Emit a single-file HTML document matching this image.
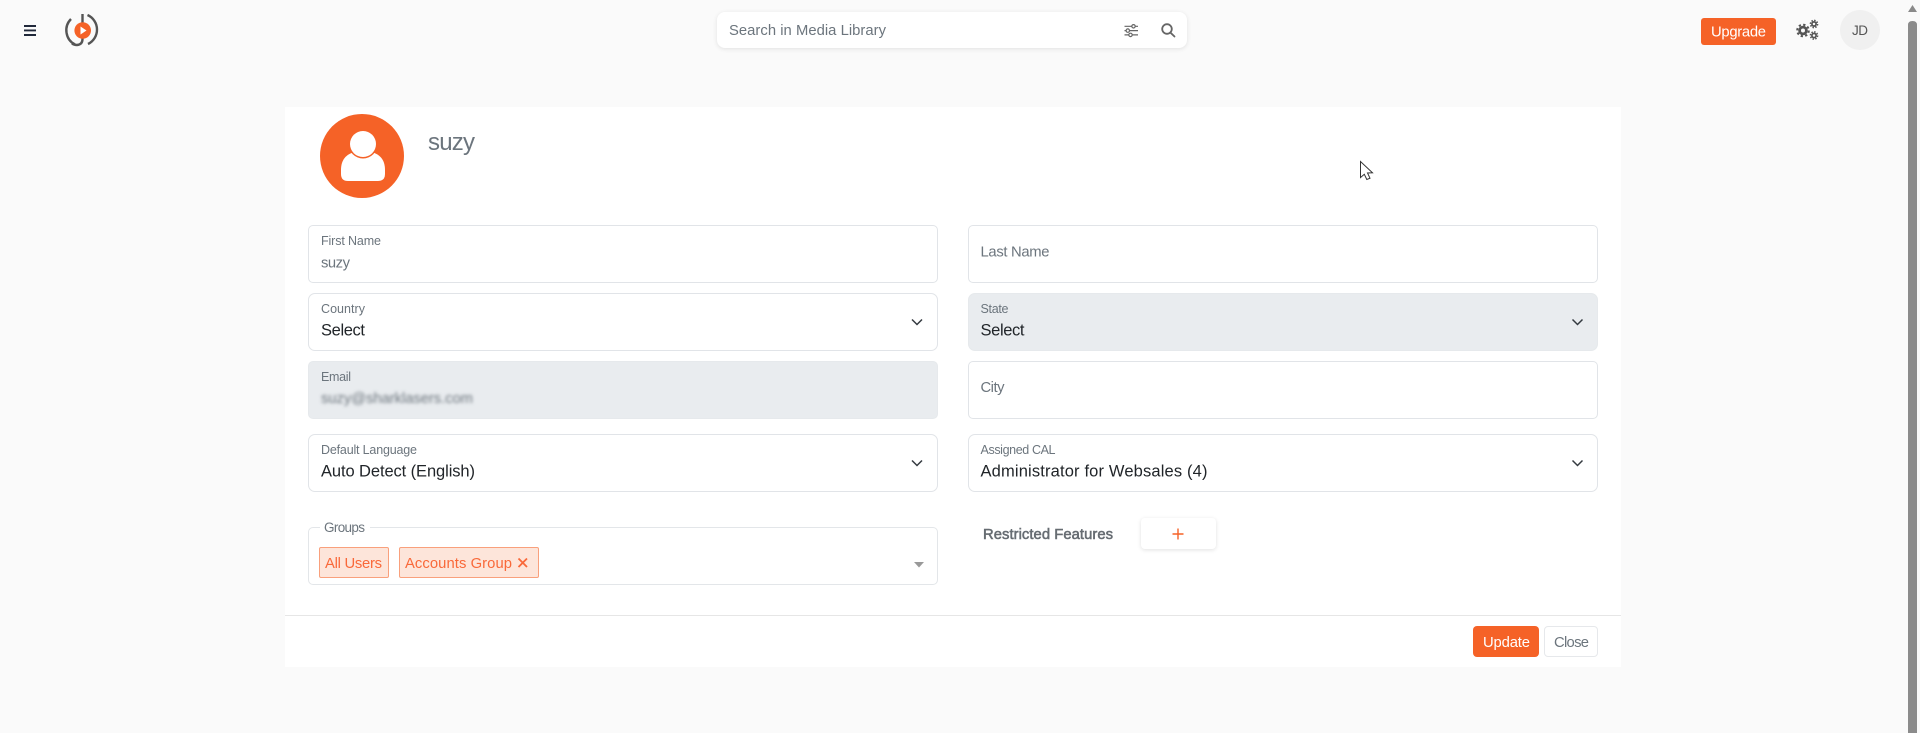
<!DOCTYPE html>
<html lang="en">
<head>
<meta charset="utf-8">
<title>User Profile</title>
<style>
html,body{margin:0;padding:0;width:1920px;height:733px;overflow:hidden;background:#fafafa;font-family:"Liberation Sans",sans-serif}
.b{position:absolute;box-sizing:border-box}
.f{background:#fff;border:1.5px solid #e1e4e8;border-radius:5px}
.d{background:#e9ecef;border-color:#e6e9ec}
#o{position:absolute;left:0;top:0}
text{font-family:"Liberation Sans",sans-serif;white-space:pre}
.l{font-size:12.5px;fill:#6c757d}
.v{font-size:16.5px;fill:#212529}
.p{font-size:14.8px;fill:#6c757d}
</style>
</head>
<body>
<div class="b" style="left:285px;top:107px;width:1336px;height:560px;background:#fff"></div>
<div class="b" style="left:285px;top:615px;width:1336px;height:1px;background:#e6e6e6"></div>
<div class="b" style="left:717px;top:12px;width:470px;height:36px;background:#fff;border-radius:8px;box-shadow:0 1px 5px rgba(0,0,0,.1)"></div>
<div class="b" style="left:1701px;top:18px;width:75px;height:27px;background:#f56227;border-radius:3px"></div>
<div class="b" style="left:1840px;top:10px;width:40px;height:40px;background:#f0f0f0;border-radius:50%"></div>

<div class="b f" style="left:308px;top:225px;width:630px;height:58px"></div>
<div class="b f" style="left:968px;top:225px;width:630px;height:58px"></div>
<div class="b f" style="left:308px;top:293px;width:630px;height:58px;border-radius:7px"></div>
<div class="b f d" style="left:968px;top:293px;width:630px;height:58px;border-radius:7px"></div>
<div class="b f d" style="left:308px;top:361px;width:630px;height:58px"></div>
<div class="b f" style="left:968px;top:361px;width:630px;height:58px"></div>
<div class="b f" style="left:308px;top:434px;width:630px;height:58px;border-radius:7px"></div>
<div class="b f" style="left:968px;top:434px;width:630px;height:58px;border-radius:7px"></div>
<div class="b" style="left:308px;top:527px;width:630px;height:58px;background:#fff;border:1px solid #e3e6e9;border-radius:5px"></div>
<div class="b" style="left:320px;top:524px;width:50px;height:8px;background:#fff"></div>
<div class="b" style="left:319px;top:547px;width:70px;height:31px;background:#fde5da;border:1px solid #f9a07c;border-radius:2px"></div>
<div class="b" style="left:399px;top:547px;width:140px;height:31px;background:#fde5da;border:1px solid #f9a07c;border-radius:2px"></div>
<div class="b" style="left:1141px;top:518px;width:75px;height:31px;background:#fff;border-radius:4px;box-shadow:0 1px 4px rgba(0,0,0,.12)"></div>
<div class="b" style="left:1473px;top:626px;width:66px;height:31px;background:#f56227;border-radius:4px"></div>
<div class="b" style="left:1544px;top:626px;width:54px;height:31px;background:#fff;border:1px solid #e6e8eb;border-radius:4px"></div>

<svg id="o" width="1920" height="733" viewBox="0 0 1920 733" xmlns="http://www.w3.org/2000/svg">
<defs><filter id="bl" x="-10%" y="-50%" width="120%" height="200%"><feGaussianBlur stdDeviation="1.6"/></filter></defs>

<!-- hamburger -->
<path d="M24 26H36M24 30.4H36M24 35H36" stroke="#20283a" stroke-width="1.900" fill="none"/>

<!-- logo -->
<g fill="none" stroke="#555" stroke-width="2.400">
<path d="M71 19A16 16 0 0 0 75 44.500"/>
<path d="M87.500 15A16 16 0 0 1 88 44"/>
<path d="M82.500 14V39Q82.500 44.500 77 45Q74 45 72 43.500"/>
</g>
<circle cx="82.700" cy="30.500" r="8.300" fill="#f56227"/>
<path d="M80.500 26.500L86.500 30.500L80.500 34.500Z" fill="#fff"/>

<!-- search -->
<text x="729" y="35" font-size="14.800" fill="#6c757d" textLength="157" lengthAdjust="spacing">Search in Media Library</text>
<g fill="none" stroke="#666" stroke-width="1.200">
<path d="M1124.500 26.300H1138M1124.500 30.600H1138M1124.500 34.900H1138"/>
<circle cx="1133.500" cy="26.300" r="1.700" fill="#fff"/>
<circle cx="1127.800" cy="30.600" r="1.700" fill="#fff"/>
<circle cx="1130.500" cy="34.900" r="1.700" fill="#fff"/>
</g>
<g fill="none" stroke="#666" stroke-width="1.800">
<circle cx="1167" cy="29" r="4.800"/>
<path d="M1170.500 32.700L1174.500 36.500" stroke-linecap="round"/>
</g>

<!-- top right -->
<text x="1711" y="36.500" font-size="14.800" fill="#fff" textLength="55" lengthAdjust="spacing">Upgrade</text>
<g fill="none" stroke="#555">
<circle cx="1803" cy="30.500" r="3.400" stroke-width="2.800"/>
<circle cx="1803" cy="30.500" r="5.800" stroke-width="2" stroke-dasharray="2.300 2.250"/>
<circle cx="1814" cy="24" r="2.100" stroke-width="1.700"/>
<circle cx="1814" cy="24" r="3.600" stroke-width="1.500" stroke-dasharray="1.500 1.330"/>
<circle cx="1814" cy="35.500" r="2.100" stroke-width="1.700"/>
<circle cx="1814" cy="35.500" r="3.600" stroke-width="1.500" stroke-dasharray="1.500 1.330"/>
</g>
<text x="1852" y="35" font-size="13.500" fill="#555" textLength="16" lengthAdjust="spacing">JD</text>

<!-- scrollbar -->
<path d="M1908 12L1912.500 5L1917 12Z" fill="#8a8a8a"/>
<path d="M1908 733V25Q1908 21 1912.500 21Q1917 21 1917 25V733Z" fill="#8b8b8b"/>

<!-- avatar -->
<circle cx="362" cy="156" r="42" fill="#f56227"/>
<path d="M341 170C341 160 346 154 355 152H371C380 154 385 160 385 170V174Q385 181 378 181H348Q341 181 341 174Z" fill="#fff"/>
<circle cx="363" cy="144" r="14.500" fill="#f56227"/>
<circle cx="363" cy="144" r="13" fill="#fff"/>
<text x="428" y="150" font-size="24" fill="#6c757d" textLength="47" lengthAdjust="spacing">suzy</text>

<!-- cursor -->
<path d="M1360.500 161.500V177.500L1364.300 174.300L1366.800 179.500L1370 178.200L1367.500 173L1372.500 172.800Z" fill="#fff" stroke="#333" stroke-width="1"/>

<!-- left col -->
<text class="l" x="321" y="245" textLength="60" lengthAdjust="spacing">First Name</text>
<text class="p" x="321" y="267.500" textLength="29" lengthAdjust="spacing">suzy</text>
<text class="l" x="321" y="313" textLength="44" lengthAdjust="spacing">Country</text>
<text class="v" x="321" y="335.500" textLength="44" lengthAdjust="spacing">Select</text>
<text class="l" x="321" y="381" textLength="30" lengthAdjust="spacing">Email</text>
<text class="p" x="321" y="403" textLength="152" lengthAdjust="spacing" filter="url(#bl)">suzy@sharklasers.com</text>
<text class="l" x="321" y="454" textLength="96" lengthAdjust="spacing">Default Language</text>
<text class="v" x="321" y="476.500" textLength="154" lengthAdjust="spacing">Auto Detect (English)</text>
<text x="324" y="532" font-size="13.500" fill="#6c757d" textLength="41" lengthAdjust="spacing">Groups</text>
<text x="325" y="568" font-size="14.800" fill="#f9693a" textLength="57" lengthAdjust="spacing">All Users</text>
<text x="405" y="568" font-size="14.800" fill="#f9693a" textLength="107" lengthAdjust="spacing">Accounts Group</text>
<path d="M518.500 558.500L527 567M527 558.500L518.500 567" stroke="#f9693a" stroke-width="1.800" fill="none"/>
<path d="M914 562H924L919 567.500Z" fill="#999"/>

<!-- right col -->
<text class="p" x="980.500" y="256.500" textLength="69" lengthAdjust="spacing">Last Name</text>
<text class="l" x="980.500" y="313" textLength="28" lengthAdjust="spacing">State</text>
<text class="v" x="980.500" y="335.500" textLength="44" lengthAdjust="spacing">Select</text>
<text class="p" x="980.500" y="392" textLength="24" lengthAdjust="spacing">City</text>
<text class="l" x="980.500" y="454" textLength="75" lengthAdjust="spacing">Assigned CAL</text>
<text class="v" x="980.500" y="476.500" textLength="227" lengthAdjust="spacing">Administrator for Websales (4)</text>
<text x="983" y="539" font-size="14.800" fill="#666c72" stroke="#666c72" stroke-width=".55" textLength="130" lengthAdjust="spacing">Restricted Features</text>
<path d="M1172.500 534H1183.500M1178 528.500V539.500" stroke="#f56227" stroke-width="1.400" fill="none"/>

<!-- chevrons -->
<g fill="none" stroke="#343a40" stroke-width="1.500">
<path d="M912 319.500L917 324.500L922 319.500"/>
<path d="M1572.500 319.500L1577.500 324.500L1582.500 319.500"/>
<path d="M912 460.500L917 465.500L922 460.500"/>
<path d="M1572.500 460.500L1577.500 465.500L1582.500 460.500"/>
</g>

<!-- footer -->
<text x="1483" y="647" font-size="14.800" fill="#fff" textLength="47" lengthAdjust="spacing">Update</text>
<text x="1554" y="647" font-size="14.800" fill="#6c757d" textLength="35" lengthAdjust="spacing">Close</text>
</svg>
</body>
</html>
